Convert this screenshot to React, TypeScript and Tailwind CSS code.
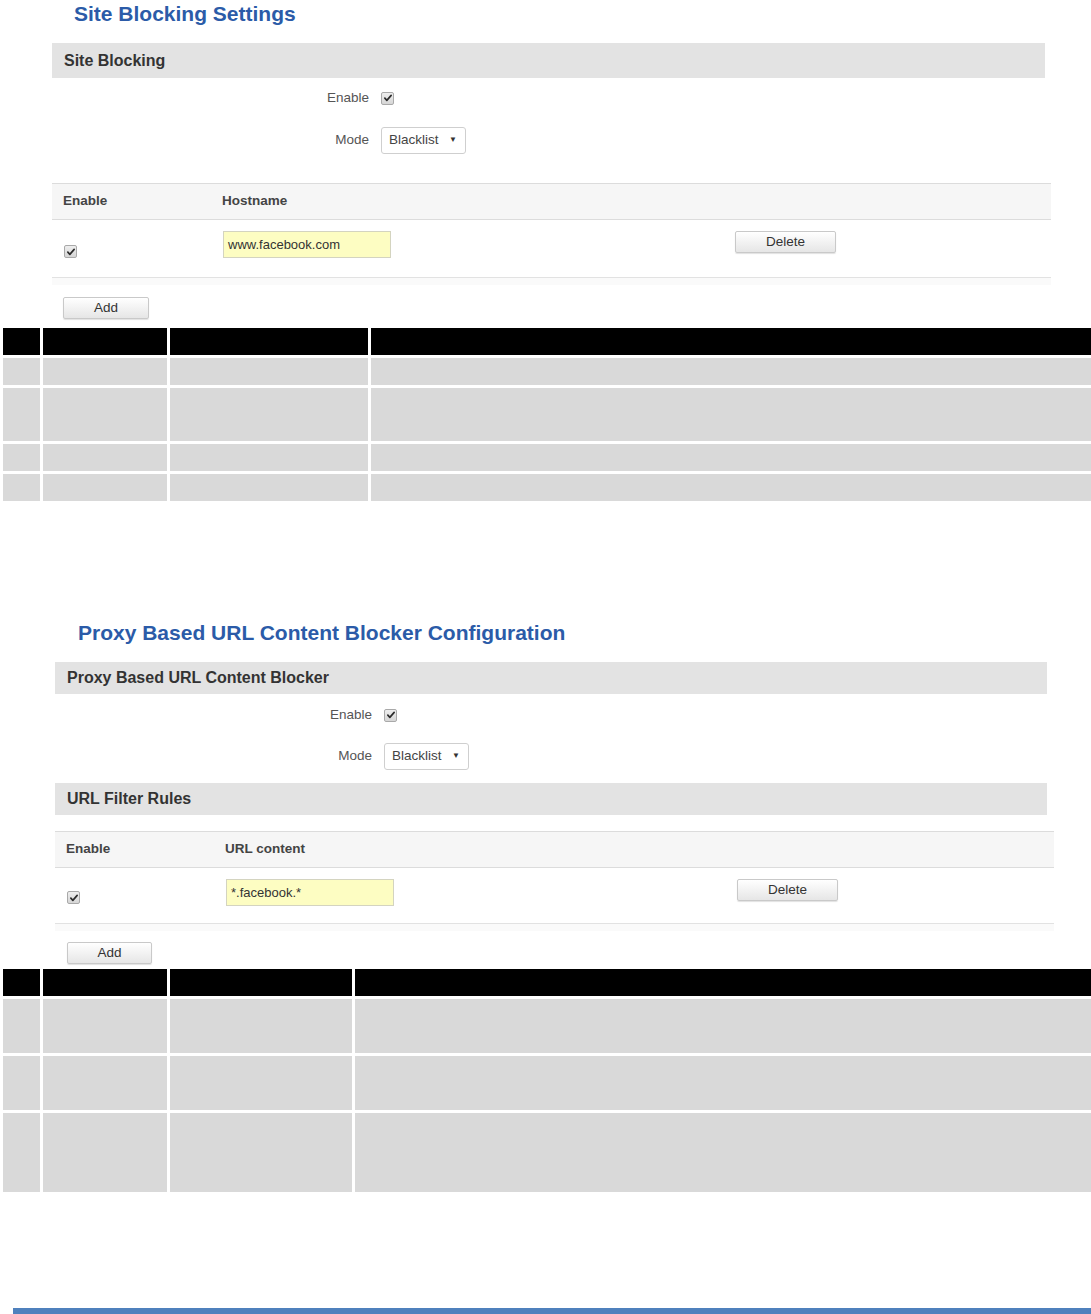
import React from "react";

const font = { fontFamily: '"Liberation Sans", Arial, sans-serif' };

function CheckBox() {
  return (
    <span className="inline-flex h-[13px] w-[13px] items-center justify-center rounded-[2px] border border-[#a9a9a9] bg-gradient-to-b from-[#eeeeee] to-[#d6d6d6]">
      <svg viewBox="0 0 12 12" className="h-[10px] w-[10px]">
        <path d="M2.2 6.2 L4.6 8.8 L9.8 2.8" fill="none" stroke="#2b2b2b" strokeWidth="2" strokeLinecap="round" strokeLinejoin="round" />
      </svg>
    </span>
  );
}

function Button({ label, w }: { label: string; w: string }) {
  return (
    <button
      className={`${w} block h-[22px] rounded-[2px] border border-[#c9c9c9] bg-gradient-to-b from-white to-[#e6e6e6] text-[13.5px] leading-none text-[#333] shadow-[0_1px_1px_rgba(0,0,0,0.12)]`}
    >
      {label}
    </button>
  );
}

function Select() {
  return (
    <div className="flex h-[27px] w-[85px] items-center justify-between rounded-[3px] border border-[#cfcfcf] bg-white pl-[7px] pr-[8px] text-[13.5px] text-[#444]">
      <span>Blacklist</span>
      <span className="text-[8px] text-[#333]">▼</span>
    </div>
  );
}

function GrayBar({ title, left, w, h }: { title: string; left: string; w: string; h: string }) {
  return (
    <div className={`${left} ${w} ${h} flex items-center bg-[#e3e3e3] pl-[12px] text-[16px] font-bold text-[#333]`}>
      {title}
    </div>
  );
}

function FormRows({ labelW, rowA, rowB }: { labelW: string; rowA: string; rowB: string }) {
  return (
    <div className="text-[13.5px] text-[#555]">
      <div className={`${rowA} flex items-center`}>
        <div className={`${labelW} text-right`}>Enable</div>
        <div className="ml-[12px] flex">
          <CheckBox />
        </div>
      </div>
      <div className={`${rowB} flex items-center`}>
        <div className={`${labelW} text-right`}>Mode</div>
        <div className="ml-[12px]">
          <Select />
        </div>
      </div>
    </div>
  );
}

function RuleTable({
  left,
  col,
  value,
  spacer,
  cbTop,
  rowH,
}: {
  left: string;
  col: string;
  value: string;
  spacer: string;
  cbTop: string;
  rowH: string;
}) {
  return (
    <div className={`${left} w-[999px]`}>
      <div className="flex h-[37px] items-center border-y border-[#dcdcdc] bg-[#f6f6f6] text-[13.5px] font-bold text-[#444]">
        <div className="w-[170px] pl-[11px]">Enable</div>
        <div>{col}</div>
      </div>
      <div className={`flex ${rowH} items-start border-b border-[#e2e2e2] bg-white`}>
        <div className={`w-[171px] pl-[12px] ${cbTop} flex`}>
          <CheckBox />
        </div>
        <div className="mt-[11px] flex h-[27px] w-[168px] items-center border border-[#d4d4c0] bg-[#fdfdc2] pl-[4px] text-[13px] text-[#333]">
          {value}
        </div>
        <div className={`${spacer} mt-[11px] flex`}>
          <Button label="Delete" w="w-[101px]" />
        </div>
      </div>
      <div className="h-[7px] bg-[#fafafa]" />
    </div>
  );
}

function InfoTable({ cols, rows }: { cols: string; rows: string[] }) {
  return (
    <div className={`grid ${cols} gap-[3px] pl-[3px]`}>
      {["h-[27px]", ...rows].map((h, r) =>
        [0, 1, 2, 3].map((c) => (
          <div key={`${r}-${c}`} className={`${h} ${r === 0 ? "bg-black" : "bg-[#d9d9d9]"}`} />
        ))
      )}
    </div>
  );
}

export default function App() {
  return (
    <div className="w-[1091px] bg-white" style={font}>
      {/* Site Blocking Settings */}
      <div className="pt-[2px] pl-[74px] text-[21px] font-bold leading-[24px] text-[#2b5ba8]">
        Site Blocking Settings
      </div>
      <div className="mt-[17px]">
        <GrayBar title="Site Blocking" left="ml-[52px]" w="w-[993px]" h="h-[35px]" />
      </div>
      <FormRows labelW="w-[369px]" rowA="h-[40px]" rowB="h-[44px]" />
      <div className="mt-[21px]">
        <RuleTable
          left="ml-[52px]"
          col="Hostname"
          value="www.facebook.com"
          spacer="ml-[344px]"
          cbTop="mt-[25px]"
          rowH="h-[58px]"
        />
      </div>
      <div className="mt-[12px] ml-[63px] flex">
        <Button label="Add" w="w-[86px]" />
      </div>
      <div className="mt-[9px]">
        <InfoTable
          cols="grid-cols-[37px_124px_198px_1fr]"
          rows={["h-[27px]", "h-[53px]", "h-[27px]", "h-[27px]"]}
        />
      </div>

      {/* Proxy Based URL Content Blocker Configuration */}
      <div className="mt-[120px] pl-[78px] text-[21px] font-bold leading-[24px] text-[#2b5ba8]">
        Proxy Based URL Content Blocker Configuration
      </div>
      <div className="mt-[17px]">
        <GrayBar title="Proxy Based URL Content Blocker" left="ml-[55px]" w="w-[992px]" h="h-[32px]" />
      </div>
      <FormRows labelW="w-[372px]" rowA="h-[42px]" rowB="h-[40px]" />
      <div className="mt-[7px]">
        <GrayBar title="URL Filter Rules" left="ml-[55px]" w="w-[992px]" h="h-[32px]" />
      </div>
      <div className="mt-[16px]">
        <RuleTable
          left="ml-[55px]"
          col="URL content"
          value="*.facebook.*"
          spacer="ml-[343px]"
          cbTop="mt-[23px]"
          rowH="h-[56px]"
        />
      </div>
      <div className="mt-[11px] ml-[67px] flex">
        <Button label="Add" w="w-[85px]" />
      </div>
      <div className="mt-[5px]">
        <InfoTable
          cols="grid-cols-[37px_124px_182px_1fr]"
          rows={["h-[54px]", "h-[54px]", "h-[79px]"]}
        />
      </div>

      <div className="mt-[116px] ml-[13px] h-[6px] bg-[#4f81bd]" />
    </div>
  );
}
